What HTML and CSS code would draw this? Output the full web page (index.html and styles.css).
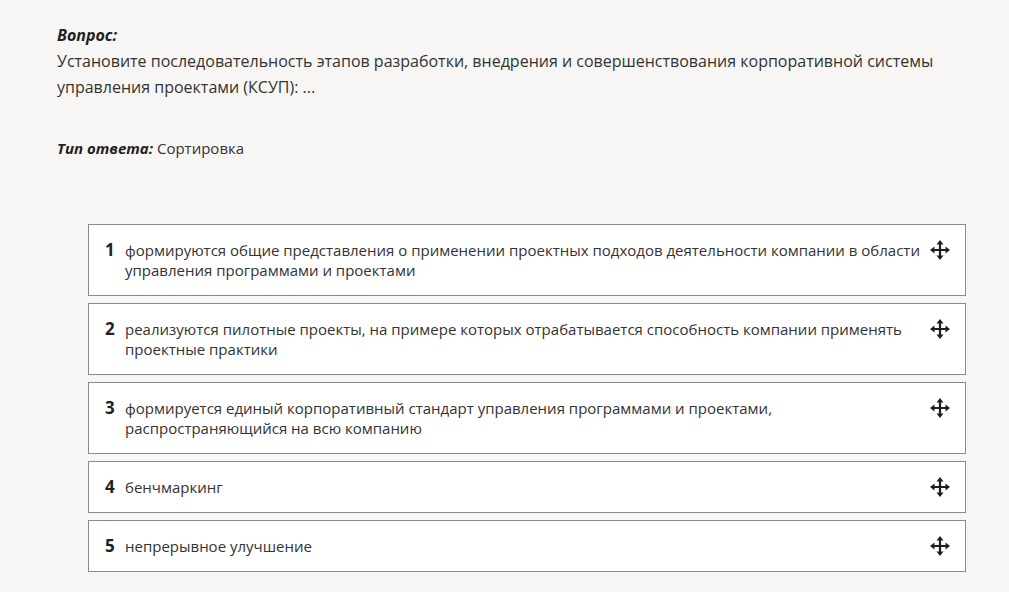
FILE: index.html
```html
<!DOCTYPE html>
<html lang="ru">
<head>
  <meta charset="UTF-8">
  <title>Сортировка</title>
  <link rel="stylesheet" href="styles.css">
</head>
<body>

  <div class="question">
    <div class="label">Вопрос:</div>
    <div class="question-text">Установите последовательность этапов разработки, внедрения и совершенствования корпоративной системы управления проектами (КСУП): ...</div>
    <div class="answer-type"><span class="label">Тип ответа:</span> Сортировка</div>
  </div>

  <!-- список для сортировки -->
  <div class="sort-list">
    <div class="sort-item">
      <span class="num">1</span>
      <span class="text">формируются общие представления о применении проектных подходов деятельности компании в области управления программами и проектами</span>
      <svg class="move" viewBox="0 0 20 20"><path d="M10 3v14M3 10h14" stroke="#1e1e1e" stroke-width="2.2"/><path d="M10 0l-3.5 4.5h7zM10 20l-3.5-4.5h7zM0 10l4.5-3.5v7zM20 10l-4.5-3.5v7z" fill="#1e1e1e"/></svg>
    </div>
    <div class="sort-item">
      <span class="num">2</span>
      <span class="text">реализуются пилотные проекты, на примере которых отрабатывается способность компании применять проектные практики</span>
      <svg class="move" viewBox="0 0 20 20"><path d="M10 3v14M3 10h14" stroke="#1e1e1e" stroke-width="2.2"/><path d="M10 0l-3.5 4.5h7zM10 20l-3.5-4.5h7zM0 10l4.5-3.5v7zM20 10l-4.5-3.5v7z" fill="#1e1e1e"/></svg>
    </div>
    <div class="sort-item">
      <span class="num">3</span>
      <span class="text">формируется единый корпоративный стандарт управления программами и проектами, распространяющийся на всю компанию</span>
      <svg class="move" viewBox="0 0 20 20"><path d="M10 3v14M3 10h14" stroke="#1e1e1e" stroke-width="2.2"/><path d="M10 0l-3.5 4.5h7zM10 20l-3.5-4.5h7zM0 10l4.5-3.5v7zM20 10l-4.5-3.5v7z" fill="#1e1e1e"/></svg>
    </div>
    <div class="sort-item">
      <span class="num">4</span>
      <span class="text">бенчмаркинг</span>
      <svg class="move" viewBox="0 0 20 20"><path d="M10 3v14M3 10h14" stroke="#1e1e1e" stroke-width="2.2"/><path d="M10 0l-3.5 4.5h7zM10 20l-3.5-4.5h7zM0 10l4.5-3.5v7zM20 10l-4.5-3.5v7z" fill="#1e1e1e"/></svg>
    </div>
    <div class="sort-item">
      <span class="num">5</span>
      <span class="text">непрерывное улучшение</span>
      <svg class="move" viewBox="0 0 20 20"><path d="M10 3v14M3 10h14" stroke="#1e1e1e" stroke-width="2.2"/><path d="M10 0l-3.5 4.5h7zM10 20l-3.5-4.5h7zM0 10l4.5-3.5v7zM20 10l-4.5-3.5v7z" fill="#1e1e1e"/></svg>
    </div>
  </div>

</body>
</html>
```

FILE: styles.css
```css
* { box-sizing: border-box; margin: 0; padding: 0; }
body {
  background: #f7f6f5;
  color: #333;
  font-family: 'Open Sans', 'Noto Sans', Arial, sans-serif;
  padding: 22px 0 0 57px;
}
.question { width: 900px; font-size: 16px; line-height: 26px; }
.label { font-weight: bold; font-style: italic; color: #222; }
.question-text { margin-bottom: 35px; }
.answer-type { font-size: 15px; }
.sort-list { display: flex; flex-direction: column; gap: 7px; margin: 63px 0 0 31px; width: 878px; }
.sort-item { display: flex; align-items: flex-start; background: #fff; border: 1px solid #8a8a8a; padding: 15px 16px 15px 16px; font-size: 15px; line-height: 20px; }
.num { font-weight: bold; font-size: 17px; color: #222; width: 20px; }
.text { flex: 1; padding-right: 10px; }
.move { width: 20px; height: 20px; margin-right: -1px; }
```
